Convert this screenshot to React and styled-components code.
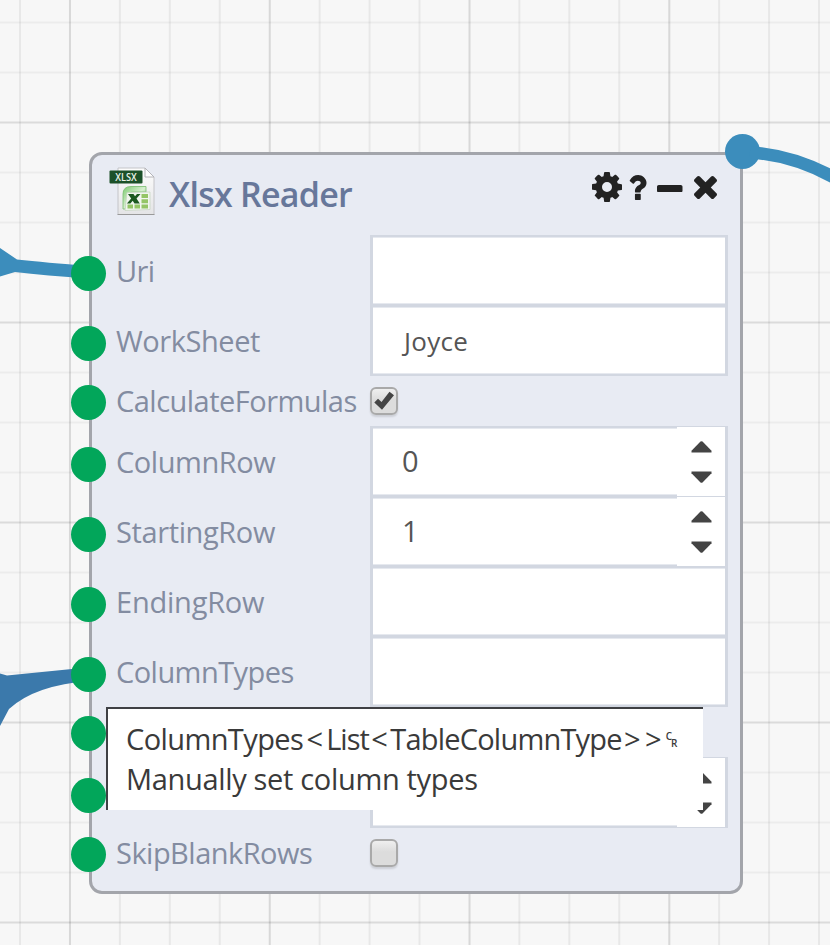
import React from "react";
import styled, { createGlobalStyle } from "styled-components";

const GlobalStyle = createGlobalStyle`
  * { box-sizing: border-box; }
  body { margin: 0; overflow: hidden; font-family: "Open Sans", "Noto Sans", sans-serif; }
`;

const Canvas = styled.main`
  position: relative;
  width: 830px;
  height: 945px;
  overflow: hidden;
  background-color: #f7f7f7;
  background-image:
    linear-gradient(90deg, rgba(0, 0, 0, 0.07) 2px, transparent 2px),
    linear-gradient(rgba(0, 0, 0, 0.07) 2px, transparent 2px),
    linear-gradient(90deg, rgba(0, 0, 0, 0.06) 2px, transparent 2px),
    linear-gradient(rgba(0, 0, 0, 0.045) 2px, transparent 2px);
  background-size: 199.8px 100%, 100% 200px, 49.95px 100%, 100% 50px;
  background-position: 69px 0, 0 121.5px, 19px 0, 0 21.5px;
`;

const Wires = styled.svg`
  position: absolute;
  inset: 0;
  width: 830px;
  height: 945px;
`;

const Node = styled.section`
  position: absolute;
  left: 89px;
  top: 152px;
  width: 654px;
  height: 742px;
  border: 3px solid #a3a5ab;
  border-radius: 13px;
  background: #e8ebf3;
`;

const Header = styled.header`
  display: flex;
  align-items: flex-start;
  height: 80px;
  padding: 11px 23.5px 0 16px;
`;

const FileIcon = styled.svg`
  width: 48px;
  height: 50px;
  flex: none;
`;

const Title = styled.h1`
  flex: 1;
  margin: 4px 0 0 13px;
  font-size: 34px;
  line-height: 48px;
  font-weight: 600;
  letter-spacing: -0.75px;
  color: #67779a;
  white-space: nowrap;
`;

const Actions = styled.div`
  display: flex;
  align-items: center;
  height: 42px;
`;

const Glyph = styled.svg`
  flex: none;
  width: ${(p) => p.$w}px;
  height: ${(p) => p.$h}px;
  margin-left: ${(p) => p.$gap || 0}px;
  margin-top: ${(p) => p.$drop || 0}px;
  fill: #222;
`;

const Row = styled.div`
  position: relative;
  display: grid;
  grid-template-columns: 254px 358px;
  align-items: center;
  height: ${(p) => (p.$short ? 51 : 70)}px;
  margin-left: 24px;
`;

const Port = styled.i`
  position: absolute;
  left: -45px;
  top: ${(p) => (p.$short ? 9.5 : 20.5)}px;
  width: 35px;
  height: 35px;
  border-radius: 50%;
  background: #02a65a;
`;

const OutPort = styled(Port)`
  left: 633px;
  top: -21px;
  background: #3c8dbc;
`;

const Label = styled.label`
  margin-top: ${(p) => (p.$short ? 1 : 0)}px;
  font-size: 29px;
  line-height: 40px;
  letter-spacing: ${(p) => p.$track || 0}px;
  color: #838ca1;
  white-space: nowrap;
`;

const Field = styled.div`
  display: flex;
  align-items: center;
  justify-content: space-between;
  height: 71px;
  border: solid #d2d7e1;
  border-width: 2px 3px;
  box-shadow: inset 0 1px #e6e9ef, inset 0 -1px #e6e9ef;
  background: #fff;
  padding-left: 29px;
  font-size: ${(p) => (p.$number ? 29 : 26)}px;
  color: #555;
`;

const Value = styled.span`
  margin-top: ${(p) => (p.$number ? -2 : 1)}px;
  margin-left: ${(p) => (p.$number ? 0 : 2)}px;
  letter-spacing: ${(p) => (p.$number ? 0 : 0.3)}px;
`;

const Spinner = styled.span`
  display: flex;
  flex: none;
  flex-direction: column;
  align-items: center;
  justify-content: center;
  gap: 18px;
  width: 48px;
  height: 69px;
  background: #fff;
`;

const Arrow = styled.svg`
  width: 21px;
  height: 12px;
  fill: #444;
  transform: ${(p) => (p.$down ? "scaleY(-1)" : "none")};
`;

const Check = styled.span`
  width: 28px;
  height: 28px;
  border: 2px solid #a9a9a9;
  border-radius: 6px;
  background: linear-gradient(#efefef, #dcdcdc 45%);
  box-shadow: 0 2px 2px rgba(0, 0, 0, 0.12);
  svg { display: block; width: 24px; height: 24px; fill: #444; }
`;

const Tooltip = styled.aside`
  position: absolute;
  left: 106px;
  top: 707px;
  width: 597px;
  height: 103px;
  padding: 10px 0 0 18px;
  border-top: 2px solid #3f4044;
  border-left: 2px solid #3f4044;
  background: #fff;
  color: #3a3a3a;
  font-size: 29px;
  line-height: 40px;
  white-space: nowrap;
`;

const TipLine = styled.div`
  display: flex;
`;

const Word = styled.span`
  letter-spacing: ${(p) => p.$track}px;
`;

const Angle = styled.span`
  width: ${(p) => p.$w}px;
  text-align: center;
`;

const Return = styled.span`
  display: flex;
  height: 40px;
  margin-left: 2px;
  font-size: 10px;
  line-height: 14px;
  font-weight: 600;
  span:first-child { padding-top: 10px; }
  span:last-child { padding-top: 17px; margin-left: -1px; }
`;

const XlsxIcon = () => (
  <FileIcon viewBox="0 0 48 50">
    <defs>
      <linearGradient id="paper" x1="0" y1="0" x2="0" y2="1">
        <stop offset="0" stopColor="#fdfdfd" />
        <stop offset="1" stopColor="#e4e4e6" />
      </linearGradient>
      <linearGradient id="leaf" x1="0" y1="0" x2="1" y2="1">
        <stop offset="0" stopColor="#7ecb72" />
        <stop offset="0.5" stopColor="#d7efcf" />
        <stop offset="1" stopColor="#4fa13d" />
      </linearGradient>
    </defs>
    <path d="M10 2H37L46 11V48.5H10Z" fill="url(#paper)" stroke="#c4c4c8" />
    <path d="M37 2V11H46Z" fill="#fff" stroke="#b4b4b8" />
    <path d="M9.500 48.500H46.500" stroke="#999" />
    <path d="M15 43V28Q15 20.500 23 20.500H38V26H25Q20.500 26 20 31L17.500 43Z" fill="url(#leaf)" stroke="#79bd6e" strokeWidth=".8" />
    <path d="M19 26.500L42 26V43.500L17 44.500Z" fill="#f1f6ee" stroke="#c3d3bd" strokeWidth=".7" />
    <path d="M33.500 28h6.500v4h-6.500zM33.500 33.300h6.500v4h-6.500zM33.500 38.600h6.500v4h-6.500zM26.500 38.600h5.500v4h-5.500zM19.500 38.600h5.500v4h-5.500z" fill="#94c565" />
    <path d="M20 28h5.500l1.500 2.300 2-2.300h3.500l-4 4.500 3.300 5h-5.300l-1.800-2.700-2.300 2.700h-3.500l4.300-5z" fill="#1d5a20" />
    <rect x="1.500" y="4.500" width="33" height="13" rx="1" fill="#1c5129" />
    <text x="18" y="14.700" textAnchor="middle" textLength="21.500" lengthAdjust="spacingAndGlyphs" fontFamily="Open Sans" fontSize="10.500" fontWeight="600" fill="#e9f2e9">XLSX</text>
  </FileIcon>
);

const fields = [
  { label: "Uri", track: -0.6, type: "text" },
  { label: "WorkSheet", track: -0.45, type: "text", value: "Joyce" },
  { label: "CalculateFormulas", track: -0.52, type: "check", checked: true },
  { label: "ColumnRow", track: -0.45, type: "number", value: "0" },
  { label: "StartingRow", track: -0.38, type: "number", value: "1" },
  { label: "EndingRow", track: -0.22, type: "text" },
  { label: "ColumnTypes", track: -0.55, type: "text" },
  { label: "", type: "check" },
  { label: "", type: "number" },
  { label: "SkipBlankRows", track: -0.52, type: "check" },
];

const FieldRow = ({ label, track, type, value, checked }) => {
  const short = type === "check";
  const number = type === "number";
  return (
    <Row $short={short}>
      <Port $short={short} />
      <Label $track={track} $short={short}>{label}</Label>
      {short ? (
        <Check>
          {checked && (
            <svg viewBox="0 0 24 24">
              <path d="M2.300 13.500L6 9.700 9.500 13 17.500 2.800 22 6.300 10 20.800Z" />
            </svg>
          )}
        </Check>
      ) : (
        <Field $number={number}>
          <Value $number={number}>{value}</Value>
          {number && (
            <Spinner>
              <Arrow viewBox="0 0 21 12"><path d="M9.500 .6Q10.500 -.2 11.500 .6L20.500 9.800V11.500H.5V9.800Z" /></Arrow>
              <Arrow $down viewBox="0 0 21 12"><path d="M9.500 .6Q10.500 -.2 11.500 .6L20.500 9.800V11.500H.5V9.800Z" /></Arrow>
            </Spinner>
          )}
        </Field>
      )}
    </Row>
  );
};

export default function App() {
  return (
    <>
      <GlobalStyle />
      <Canvas>
        <Wires viewBox="0 0 830 945">
          <path d="M0 248L17 259.500Q45 262.500 90 266V278.500Q45 275.500 15 272L0 276.500Z" fill="#3c8dbc" />
          <path d="M0 673.500L7 675.500L72 669H90V681Q35 685 9 709L0 726Z" fill="#3b79ab" />
        </Wires>
        <Node>
          <Header>
            <XlsxIcon />
            <Title>Xlsx Reader</Title>
            <Actions>
              <Glyph $w={30} $h={30} viewBox="128 128 1536 1536"><path d="M1152 896q0-106-75-181t-181-75-181 75-75 181 75 181 181 75 181-75 75-181zm512-109v222q0 12-8 23t-20 13l-185 28q-19 54-39 91 35 50 107 138 10 12 10 25t-9 23q-27 37-99 108t-94 71q-12 0-26-9l-138-108q-44 23-91 38-16 136-29 186-7 28-36 28h-222q-14 0-24.500-8.500t-11.500-21.500l-28-184q-49-16-90-37l-141 107q-10 9-25 9-14 0-25-11-126-114-165-168-7-10-7-23 0-12 8-23 15-21 51-66.500t54-70.500q-27-50-41-99l-183-27q-13-2-21-12.500t-8-23.500v-222q0-12 8-23t19-13l186-28q14-46 39-92-40-57-107-138-10-12-10-24 0-10 9-23 26-36 98.500-107.500t94.500-71.500q13 0 26 10l138 107q44-23 91-38 16-136 29-186 7-28 36-28h222q14 0 24.500 8.500t11.500 21.500l28 184q49 16 90 37l142-107q9-9 24-9 13 0 25 10 129 119 165 170 7 8 7 22 0 12-8 23-15 21-51 66.500t-54 70.500q26 50 41 98l183 28q13 2 21 12.500t8 23.500z" /></Glyph>
              <Glyph $w={18.5} $h={25} $gap={6.5} viewBox="386 256 1018 1280" preserveAspectRatio="none"><path d="M1088 1256v240q0 16-12 28t-28 12h-240q-16 0-28-12t-12-28v-240q0-16 12-28t28-12h240q16 0 28 12t12 28zm316-600q0 54-15.500 101t-35 76.500-55 59.500-57.500 43.500-61 35.500q-41 23-68.500 65t-27.500 67q0 17-12 32.500t-28 15.500h-240q-15 0-25.500-18.500t-10.500-37.500v-45q0-83 65-156.500t143-108.500q59-27 84-56t25-76q0-42-46.500-74t-107.500-32q-65 0-108 29-35 25-107 115-13 16-31 16-12 0-25-8l-164-125q-13-10-15.500-25t5.500-28q160-266 464-266 80 0 161 31t146 83 106 127.500 41 158.500z" /></Glyph>
              <Glyph $w={25.5} $h={7.5} $gap={10.5} $drop={3} viewBox="192 640 1408 384" preserveAspectRatio="none"><path d="M1600 736v192q0 40-28 68t-68 28h-1216q-40 0-68-28t-28-68v-192q0-40 28-68t68-28h1216q40 0 68 28t28 68z" /></Glyph>
              <Glyph $w={23} $h={23} $gap={11} $drop={1.5} viewBox="302 366 1188 1188"><path d="M1490 1322q0 40-28 68l-136 136q-28 28-68 28t-68-28l-294-294-294 294q-28 28-68 28t-68-28l-136-136q-28-28-28-68t28-68l294-294-294-294q-28-28-28-68t28-68l136-136q28-28 68-28t68 28l294 294 294-294q28-28 68-28t68 28l136 136q28 28 28 68t-28 68l-294 294 294 294q28 28 28 68z" /></Glyph>
            </Actions>
          </Header>
          {fields.map((f, i) => <FieldRow key={i} {...f} />)}
          <OutPort />
        </Node>
        <Wires viewBox="0 0 830 945">
          <path d="M750 152.500Q796 155 842 182" fill="none" stroke="#3c8dbc" strokeWidth="12.500" />
        </Wires>
        <Tooltip>
          <TipLine>
            <Word $track={-0.6}>ColumnTypes</Word>
            <Angle $w={23}>&lt;</Angle>
            <Word $track={-1}>List</Word>
            <Angle $w={21.5}>&lt;</Angle>
            <Word $track={-0.8}>TableColumnType</Word>
            <Angle $w={21}>&gt;</Angle>
            <Angle $w={21}>&gt;</Angle>
            <Return><span>C</span><span>R</span></Return>
          </TipLine>
          <TipLine><Word $track={-0.33}>Manually set column types</Word></TipLine>
        </Tooltip>
      </Canvas>
    </>
  );
}
